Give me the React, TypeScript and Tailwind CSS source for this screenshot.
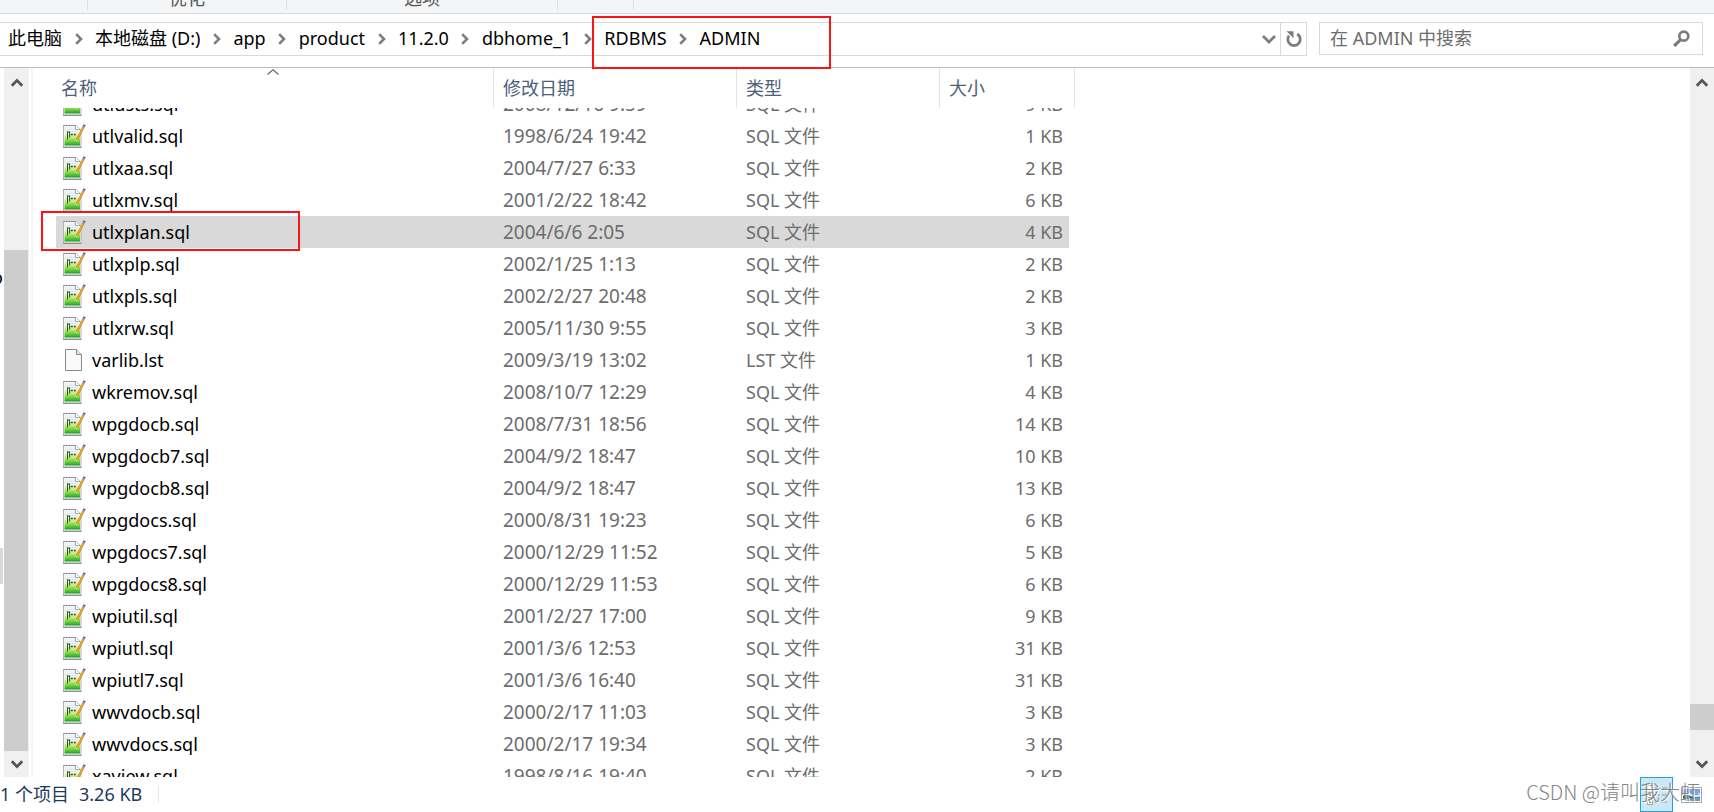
import { useLayoutEffect, useRef } from "react";

type FileRow = { name: string; date: string; kind: string; size: string };

const files: FileRow[] = [
  { name: "utlusts.sql", date: "2008/12/16 9:59", kind: "SQL 文件", size: "9 KB" },
  { name: "utlvalid.sql", date: "1998/6/24 19:42", kind: "SQL 文件", size: "1 KB" },
  { name: "utlxaa.sql", date: "2004/7/27 6:33", kind: "SQL 文件", size: "2 KB" },
  { name: "utlxmv.sql", date: "2001/2/22 18:42", kind: "SQL 文件", size: "6 KB" },
  { name: "utlxplan.sql", date: "2004/6/6 2:05", kind: "SQL 文件", size: "4 KB" },
  { name: "utlxplp.sql", date: "2002/1/25 1:13", kind: "SQL 文件", size: "2 KB" },
  { name: "utlxpls.sql", date: "2002/2/27 20:48", kind: "SQL 文件", size: "2 KB" },
  { name: "utlxrw.sql", date: "2005/11/30 9:55", kind: "SQL 文件", size: "3 KB" },
  { name: "varlib.lst", date: "2009/3/19 13:02", kind: "LST 文件", size: "1 KB" },
  { name: "wkremov.sql", date: "2008/10/7 12:29", kind: "SQL 文件", size: "4 KB" },
  { name: "wpgdocb.sql", date: "2008/7/31 18:56", kind: "SQL 文件", size: "14 KB" },
  { name: "wpgdocb7.sql", date: "2004/9/2 18:47", kind: "SQL 文件", size: "10 KB" },
  { name: "wpgdocb8.sql", date: "2004/9/2 18:47", kind: "SQL 文件", size: "13 KB" },
  { name: "wpgdocs.sql", date: "2000/8/31 19:23", kind: "SQL 文件", size: "6 KB" },
  { name: "wpgdocs7.sql", date: "2000/12/29 11:52", kind: "SQL 文件", size: "5 KB" },
  { name: "wpgdocs8.sql", date: "2000/12/29 11:53", kind: "SQL 文件", size: "6 KB" },
  { name: "wpiutil.sql", date: "2001/2/27 17:00", kind: "SQL 文件", size: "9 KB" },
  { name: "wpiutl.sql", date: "2001/3/6 12:53", kind: "SQL 文件", size: "31 KB" },
  { name: "wpiutl7.sql", date: "2001/3/6 16:40", kind: "SQL 文件", size: "31 KB" },
  { name: "wwvdocb.sql", date: "2000/2/17 11:03", kind: "SQL 文件", size: "3 KB" },
  { name: "wwvdocs.sql", date: "2000/2/17 19:34", kind: "SQL 文件", size: "3 KB" },
  { name: "xaview.sql", date: "1998/8/16 19:40", kind: "SQL 文件", size: "2 KB" },
];

const selectedName = "utlxplan.sql";

function SqlIcon() {
  return (
    <svg className="h-6 w-6 shrink-0" viewBox="0 0 24 24" aria-hidden="true">
      <defs>
        <linearGradient id="sheet" x1="0" y1="0" x2="0" y2="1">
          <stop offset="0" stopColor="#eef3f8" />
          <stop offset="0.3" stopColor="#f1f7ec" />
          <stop offset="0.55" stopColor="#c3ee7c" />
          <stop offset="0.82" stopColor="#62cc33" />
          <stop offset="1" stopColor="#1f9a2c" />
        </linearGradient>
      </defs>
      <path d="M1.5 1.5H14L19 6V23H1.5Z" fill="#f6f6f6" stroke="#b4b4b4" />
      <path d="M1.5 1.5H14" stroke="#7d7d7d" strokeDasharray="1.5 1" />
      <path d="M2.5 3H14L18 7V21.5H2.5Z" fill="url(#sheet)" />
      <path d="M2.5 5.5H14M2.5 7.5H16" stroke="#d5e0ea" strokeWidth="0.7" />
      <path d="M13.5 1.5V5.5H18" fill="#fff" stroke="#9a9fa4" strokeWidth="0.9" />
      <path d="M1 23.4H19.5" stroke="#8a8a8a" />
      <path d="M5.5 7.5V15.5M5.5 8H7.6M7.6 7.5V13.5" stroke="#3c4a34" strokeWidth="1" fill="none" />
      <path d="M8.8 10.5H14" stroke="#3c4a34" strokeWidth="1.6" strokeDasharray="2 1" />
      <path d="M21 4L14.8 16" stroke="#b87c10" strokeWidth="2.2" />
      <path d="M20.8 4L14.6 16" stroke="#efad25" strokeWidth="1.5" />
      <path d="M13.8 15.4L15.8 16.4L13.2 18.8Z" fill="#e8cf9a" />
      <path d="M13.6 17.4L14.3 17.8L13 19Z" fill="#333" />
      <path d="M21.9 2.2L20.9 4.2" stroke="#8d97a5" strokeWidth="2.4" />
      <path d="M22.6 0.8L21.9 2.2" stroke="#a63c4c" strokeWidth="2.4" />
    </svg>
  );
}

function BlankFileIcon() {
  return (
    <svg className="h-6 w-6 shrink-0" viewBox="0 0 24 24" aria-hidden="true">
      <path d="M3.5 1.5H14.5L19.5 6.5V22.5H3.5Z" fill="#fafafa" stroke="#8a8a8a" />
      <path d="M14.5 1.5V6.5H19.5" fill="#e6e6e6" stroke="#8a8a8a" />
    </svg>
  );
}

function CrumbArrow() {
  return (
    <span className="flex w-[33px] justify-center pt-0.5">
      <svg width="8" height="14" viewBox="0 0 8 14" aria-hidden="true">
        <path d="M1.2 2.2L6 7L1.2 11.8" fill="none" stroke="#7d7d7d" strokeWidth="2.6" />
      </svg>
    </span>
  );
}

function Crumb({ label }: { label: string }) {
  return (
    <a href="#" className="whitespace-nowrap text-black">
      {label}
    </a>
  );
}

function ScrollArrow({ direction }: { direction: "up" | "down" }) {
  const up = direction === "up";
  return (
    <button
      type="button"
      aria-label={up ? "向上滚动" : "向下滚动"}
      className={`flex w-full shrink-0 items-center justify-center ${up ? "h-[30px]" : "h-[26px]"}`}
    >
      <svg width="12" height="10" viewBox="0 0 12 10" aria-hidden="true">
        <path
          d={up ? "M0.8 7.8L6 2.4L11.2 7.8" : "M0.8 2.2L6 7.6L11.2 2.2"}
          fill="none"
          stroke="#555"
          strokeWidth="2.8"
        />
      </svg>
    </button>
  );
}

export default function App() {
  const listRef = useRef<HTMLDivElement>(null);

  useLayoutEffect(() => {
    if (listRef.current) listRef.current.scrollTop = 20;
  }, []);

  return (
    <div className="flex h-screen flex-col overflow-hidden bg-white font-['Noto_Sans','Noto_Sans_CJK_SC',sans-serif] text-lg leading-8 text-black">
      {/* Ribbon group captions */}
      <div className="flex h-3.5 shrink-0 overflow-hidden border-b border-[#d6d7d9] bg-[#f4f5f7] text-[#555]">
        <div className="h-2.5 w-22 border-r border-[#dfe0e2]" />
        <div className="flex h-2.5 w-[199px] items-end justify-center border-r border-[#dfe0e2]">
          <span className="leading-6">优化</span>
        </div>
        <div className="flex h-2.5 w-[271px] items-end justify-center border-r border-[#dfe0e2]">
          <span className="leading-6">选项</span>
        </div>
        <div className="h-2.5 w-19 border-r border-[#dfe0e2]" />
      </div>

      {/* Address bar and search */}
      <div className="flex h-[54px] shrink-0 border-b border-[#bcbdbe] pt-2 pr-[11px]">
        <div className="flex h-[34px] flex-1 border border-l-0 border-[#d9d9d9]">
          <nav aria-label="地址" className="flex flex-1 items-center pb-0.5 pl-2">
            <Crumb label="此电脑" />
            <CrumbArrow />
            <Crumb label="本地磁盘 (D:)" />
            <CrumbArrow />
            <Crumb label="app" />
            <CrumbArrow />
            <Crumb label="product" />
            <CrumbArrow />
            <Crumb label="11.2.0" />
            <CrumbArrow />
            <Crumb label="dbhome_1" />
            <CrumbArrow />
            <span className="relative flex items-center">
              <Crumb label="RDBMS" />
              <CrumbArrow />
              <Crumb label="ADMIN" />
              <span className="pointer-events-none absolute -top-1.5 -left-3 z-20 h-[53px] w-[239px] border-2 border-[#fb1414]" />
            </span>
          </nav>
          <button type="button" aria-label="以前的位置" className="flex w-[23px] items-center justify-center">
            <svg width="14" height="10" viewBox="0 0 14 10" aria-hidden="true">
              <path d="M1 2L7 8L13 2" fill="none" stroke="#7d7d7d" strokeWidth="2.8" />
            </svg>
          </button>
          <button
            type="button"
            aria-label="刷新"
            className="flex w-[26px] items-center justify-center border-l border-[#d9d9d9]"
          >
            <svg width="18" height="18" viewBox="0 0 18 18" aria-hidden="true">
              <path d="M12.2 4A6.2 6.2 0 1 1 4 5.6" fill="none" stroke="#7d7d7d" strokeWidth="2.8" />
              <path d="M1.5 1.2H8.5V8.2Z" fill="#7d7d7d" />
            </svg>
          </button>
        </div>
        <label className="ml-3 flex h-[33px] w-96 items-center border border-[#d9d9d9] pr-3 pb-0.5 pl-2.5">
          <input
            type="text"
            aria-label="搜索"
            placeholder="在 ADMIN 中搜索"
            className="h-full min-w-0 flex-1 outline-none placeholder:text-[#6d6d6d]"
          />
          <svg width="17" height="18" viewBox="0 0 17 18" aria-hidden="true">
            <circle cx="10.8" cy="7.2" r="4.5" fill="none" stroke="#7d7d7d" strokeWidth="2.7" />
            <path d="M7.6 10.6L1.2 17" stroke="#7d7d7d" strokeWidth="3.2" />
          </svg>
        </label>
      </div>

      <div className="flex min-h-0 flex-1">
        {/* Navigation pane edge */}
        <div className="relative w-1 shrink-0 overflow-hidden">
          <span className="absolute top-[201px] right-px leading-4">o</span>
          <span className="absolute top-[480px] left-0 h-9 w-[3px] bg-[#d9d9d9]" />
        </div>
        <div className="flex w-[25px] shrink-0 flex-col bg-[#f0f0f0]">
          <ScrollArrow direction="up" />
          <div className="flex-[152]" />
          <div className="mr-px flex-[501] bg-[#cdcdcd]" />
          <ScrollArrow direction="down" />
        </div>
        <div className="ml-0.5 w-0.5 shrink-0 bg-[#f5f5f5]" />

        {/* File list */}
        <div ref={listRef} className="min-w-0 flex-1 overflow-hidden pl-[23px]">
          <table className="w-[1019px] table-fixed border-separate border-spacing-0 text-left">
            <colgroup>
              <col className="w-[438px]" />
              <col className="w-[243px]" />
              <col className="w-[203px]" />
              <col className="w-[129px]" />
              <col className="w-1.5" />
            </colgroup>
            <thead className="sticky top-0 z-10 bg-white text-[#4c607a]">
              <tr className="h-10">
                <th className="relative border-r border-[#e5e5e5] p-0 pl-[5px] font-normal" aria-sort="ascending">
                  名称
                  <svg
                    className="absolute top-px left-1/2 -ml-2"
                    width="12"
                    height="6"
                    viewBox="0 0 12 6"
                    aria-hidden="true"
                  >
                    <path d="M0.5 5.5L6 0.8L11.5 5.5" fill="none" stroke="#666" strokeWidth="1.1" />
                  </svg>
                </th>
                <th className="border-r border-[#e5e5e5] p-0 pl-[9px] font-normal">修改日期</th>
                <th className="border-r border-[#e5e5e5] p-0 pl-[9px] font-normal">类型</th>
                <th className="border-r border-[#e5e5e5] p-0 pl-[9px] font-normal" colSpan={2}>
                  大小
                </th>
              </tr>
            </thead>
            <tbody className="text-[#6d6d6d]">
              {files.map((file) => {
                const selected = file.name === selectedName;
                const cell = selected ? "bg-[#d9d9d9]" : "";
                return (
                  <tr key={file.name} className="h-8" aria-selected={selected}>
                    <td className={`relative p-0 ${cell}`}>
                      <div className="flex h-8 items-center gap-1.5 pl-1.5 text-black">
                        {file.name.endsWith(".sql") ? <SqlIcon /> : <BlankFileIcon />}
                        {file.name}
                      </div>
                      {selected && (
                        <span className="pointer-events-none absolute -top-[5px] -left-[15px] h-10 w-[259px] border-2 border-[#fb1414]" />
                      )}
                    </td>
                    <td className={`p-0 pl-[9px] text-[19px] leading-8 ${cell}`}>{file.date}</td>
                    <td className={`p-0 pl-[9px] ${cell}`}>{file.kind}</td>
                    <td className={`p-0 pr-1.5 text-right ${cell}`}>{file.size}</td>
                    <td className="p-0" />
                  </tr>
                );
              })}
            </tbody>
          </table>
        </div>

        <div className="flex w-6 shrink-0 flex-col bg-[#f0f0f0]">
          <ScrollArrow direction="up" />
          <div className="flex-[606]" />
          <div className="flex-[26] bg-[#cdcdcd]" />
          <div className="flex-[21]" />
          <ScrollArrow direction="down" />
        </div>
      </div>

      {/* Status bar */}
      <footer className="relative flex h-[35px] shrink-0 items-center text-[#1e395b]">
        <div className="flex items-center pb-0.5">
          <span>1 个项目</span>
          <span className="ml-2.5">3.26 KB</span>
          <span className="ml-4 h-[18px] w-px bg-[#e5e5e5]" />
        </div>
        <div className="ml-auto flex h-full items-center gap-2 pr-3">
          <button
            type="button"
            aria-label="详细信息"
            className="flex h-[35px] w-[33px] items-center justify-center border border-[#26a0da] bg-[#cbe8f6]"
          >
            <svg width="22" height="22" viewBox="0 0 22 22" aria-hidden="true">
              <path d="M1.5 1.5H6.5V6.5H1.5ZM1.5 8.5H6.5V13.5H1.5ZM1.5 15.5H6.5V20.5H1.5Z" fill="#fff" stroke="#a3a3a3" />
              <path d="M3 10H5V12H3Z" fill="#b03030" />
              <path d="M3 17H5V19H3Z" fill="#7a8a5a" />
              <path d="M9 4H14M16 4H21M9 11H14M16 11H21M9 18H14M16 18H21" stroke="#8b979f" />
            </svg>
          </button>
          <button type="button" aria-label="大缩略图" className="flex h-full items-center">
            <svg width="21" height="16" viewBox="0 0 21 16" aria-hidden="true">
              <path d="M0.5 0.5H20.5V15.5H0.5Z" fill="#fff" stroke="#a5a5a5" />
              <path d="M2 2H19V8H2Z" fill="#6ba5f0" />
              <path d="M2 7Q6 4 11 7T19 7V10H2Z" fill="#d3e5f5" />
              <path d="M2 8Q5 7 9 9T19 10V11H2Z" fill="#2f6a55" />
              <path d="M2 11H19V14H2Z" fill="#6d9cc4" />
            </svg>
          </button>
        </div>
        <span className="pointer-events-none absolute right-3.5 bottom-1 whitespace-nowrap font-['Noto_Sans_CJK_SC',sans-serif] text-xl leading-8 font-light text-[#858585] [text-shadow:1px_1px_0_#fff]">
          CSDN @请叫我大虾
        </span>
      </footer>
    </div>
  );
}
